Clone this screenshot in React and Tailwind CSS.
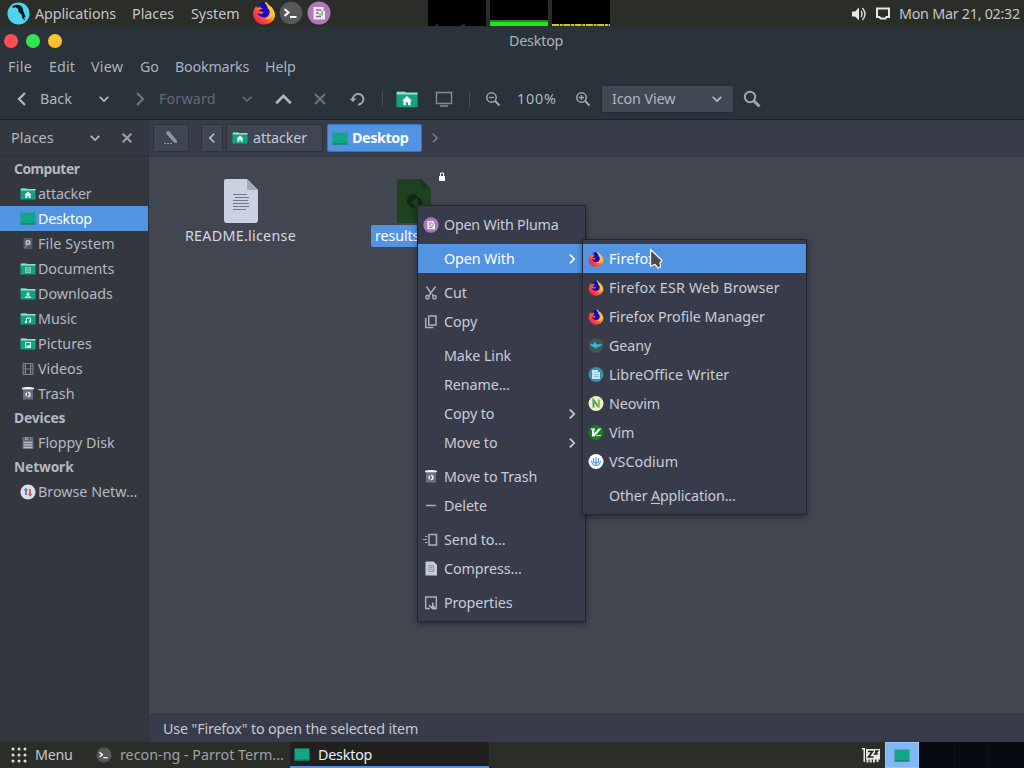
import React from "react";

function Firefox({ className }) {
  return (
    <svg viewBox="0 0 24 24" className={className}>
      <defs>
        <linearGradient id="ff" x1="1" y1="0" x2="0.1" y2="0.9">
          <stop offset="0.1" stopColor="#fff04a" />
          <stop offset="0.4" stopColor="#ffb32c" />
          <stop offset="0.65" stopColor="#ff5a34" />
          <stop offset="1" stopColor="#e8164e" />
        </linearGradient>
      </defs>
      <path d="M4 5 5.500 7 8 5.500 12 4 14 0.500C15 3 18 4.500 20 7c2 2.500 3 4.500 3 7 0 5.500-5 9.500-11 9.500S1 19 1 13C1 9.500 2.500 8 4 5Z" fill="url(#ff)" />
      <path d="M15 1c4 4 5.500 8 4 12-1.500 3-4 4.500-6.500 4.500 5 1.500 9-1.500 9-6.500C21.500 7 17 4 15 1Z" fill="#ffc92d" />
      <path d="M7 3 11.500 1.500c3 1.500 4 3.500 4.200 6 2 1.200 2.300 3.500 1.500 5.500-1.200 3-4.200 4-7.200 3-2.500-.7-4-2-4.500-3.500l5 .5 1-2-4.500-1c.5-1.500 2-2 4-2.500L7 6l2.500-1.500Z" fill="#1605c8" />
    </svg>
  );
}

function Pluma({ className }) {
  return (
    <svg viewBox="0 0 24 24" className={className}>
      <circle cx="12" cy="12" r="11.500" fill="#ad78b6" />
      <path d="M6.500 6h10v4h1.500v8.500H6.500Z" fill="#f3e7f3" />
      <path d="M9 9h5M9 12h3M9 15.500h5" stroke="#93659b" strokeWidth="1.500" />
      <path d="M15 9.500v4h-3" stroke="#8ebd91" strokeWidth="1.800" fill="none" />
    </svg>
  );
}

function Term({ className }) {
  return (
    <svg viewBox="0 0 24 24" className={className}>
      <circle cx="12" cy="12" r="11.300" fill="#575757" />
      <path d="m5.500 8 4 3.500-4 3.500" stroke="#fff" strokeWidth="2" fill="none" />
      <path d="M11 16h6.500" stroke="#fff" strokeWidth="2" />
    </svg>
  );
}

function Parrot({ className }) {
  return (
    <svg viewBox="0 0 24 24" className={className}>
      <circle cx="12" cy="12" r="11.500" fill="#4fd3f0" />
      <path d="M5.500 4.500 9 3c3-.5 6 .8 7.200 3l1 4 2.500 6-1.700-.5.500 4-2.700-3-.5-3.500L12 10.500 11.500 7 9 5.500 6 6Z" fill="#07151c" />
    </svg>
  );
}

function Folder({ kind, className }) {
  return (
    <svg viewBox="0 0 16 12" className={className}>
      <path d="M.5 1.500Q.5.500 1.500.500H6L7 1.500H15.500V11.500H.5Z" fill="#13a380" />
      <path d="M.8 2.500V.6H6.500l1 .5H15.500V2.500Z" fill="#8fe3cc" />
      {kind === "home" && <path d="m8 3.500 3.500 3.300h-1V10H8.800V8H7.200v2H5.500V6.800h-1Z" fill="#fff" />}
      {kind === "doc" && <path d="M5 4h6v6H5Z" fill="#79ccb9" />}
      {kind === "doc" && <path d="M6 5.500h4M6 7h4M6 8.500h4" stroke="#3c9e89" strokeWidth=".6" />}
      {kind === "down" && <path d="M8 4v3M6.500 6 8 7.500 9.500 6M5 9.200h6" stroke="#d9fff5" strokeWidth="1.200" fill="none" />}
      {kind === "music" && <path d="M6.500 9V5h4v3.500" stroke="#d9fff5" strokeWidth="1" fill="none" />}
      {kind === "music" && <path d="M5 8h2v2H5ZM9 7.500h2v2H9Z" fill="#d9fff5" />}
      {kind === "pic" && <path d="M5.500 4.500h5v5h-5Z" stroke="#d9fff5" strokeWidth="1" fill="none" />}
      {kind === "pic" && <path d="m6 9 2-2 1 .8 1.500-1.800v3Z" fill="#d9fff5" />}
    </svg>
  );
}

function Desk({ className }) {
  return (
    <svg viewBox="0 0 16 13" className={className}>
      <path d="M.5.500h15v12H.5Z" fill="#13a587" />
      <path d="M.5 11.500h15v1H.5Z" fill="#0d765e" />
    </svg>
  );
}

function Trash({ className }) {
  return (
    <svg viewBox="0 0 14 16" className={className}>
      <path d="M2 3h10v10.500H2Z" fill="#697080" />
      <path d="M1 1.700 5 1h4l4 .7v1.500H1Z" fill="#eef0f4" />
      <circle cx="7" cy="8.500" r="2" stroke="#f1f3f6" strokeWidth="1.400" strokeDasharray="3.200 1" fill="none" />
    </svg>
  );
}

function Drive({ className }) {
  return (
    <svg viewBox="0 0 14 16" className={className}>
      <path d="M2.500 2h9v11h-9Z" fill="#555b66" />
      <circle cx="7" cy="6.500" r="2.700" fill="#b6bbc5" />
      <circle cx="7" cy="6.500" r=".9" fill="#555b66" />
      <path d="m6 9-2 3" stroke="#8d939e" />
    </svg>
  );
}

function Film({ className }) {
  return (
    <svg viewBox="0 0 14 16" className={className}>
      <path d="M2 2.500h10v11H2ZM4.500 2.500v11M9.500 2.500v11M4.500 8h5" stroke="#7f8590" fill="none" />
      <path d="M2 5h2M2 8h2M2 11h2M10 5h2M10 8h2M10 11h2" stroke="#7f8590" />
    </svg>
  );
}

function Floppy({ className }) {
  return (
    <svg viewBox="0 0 14 16" className={className}>
      <path d="M1.500 2h10l1 1v11h-11Z" fill="#626974" />
      <path d="M4 2h6v3H4Z" fill="#888f9b" />
      <path d="M7.500 2.500h1.500v2H7.500Z" fill="#33373f" />
      <path d="M2.500 7.500h9M2.500 10h9M2.500 12.500h9" stroke="#b7bdc7" strokeWidth="1.400" />
    </svg>
  );
}

function Net({ className }) {
  return (
    <svg viewBox="0 0 16 16" className={className}>
      <circle cx="8" cy="8" r="7.600" fill="#dcdfe8" />
      <path d="M3.500 6.500 6 3.500l2.300 3H7V11H5V6.500Z" fill="#657fa8" />
      <path d="M7.700 9.800 10 13l2.500-3.200H11V5H9v4.800Z" fill="#e25a5a" />
    </svg>
  );
}

function Chevron({ dir, className, w = 2 }) {
  const d = { left: "M10 1 4 7l6 6", right: "M4 1l6 6-6 6", down: "M2 4.500 7 9.500l5-5", up: "M1 10l6-6 6 6" }[dir];
  return (
    <svg viewBox="0 0 14 14" className={className}>
      <path d={d} stroke="currentColor" strokeWidth={w} fill="none" />
    </svg>
  );
}

function Cross({ className }) {
  return (
    <svg viewBox="0 0 14 14" className={className}>
      <path d="m2 2 10 10M12 2 2 12" stroke="currentColor" strokeWidth="2.400" fill="none" />
    </svg>
  );
}

function Zoom({ sign, className }) {
  return (
    <svg viewBox="0 0 16 16" className={className}>
      <circle cx="6.500" cy="6.500" r="4.700" stroke="#a2a8b2" strokeWidth="1.500" fill="none" />
      <path d="m10 10 4.500 4.500" stroke="#a2a8b2" strokeWidth="2" />
      <path d={sign === "+" ? "M4 6.500h5M6.500 4v5" : "M4 6.500h5"} stroke="#a2a8b2" strokeWidth="1.300" />
    </svg>
  );
}

function ZRam({ className }) {
  return (
    <svg viewBox="0 0 18 16" className={className}>
      <path d="M0 1h3v14H1.500V2.500H0Z" fill="#e5e5e2" />
      <path d="M4 2h14v10.500H4Z" fill="#e5e5e2" />
      <path d="M6 4.500h4.500L6.500 10H11.500M13 4h2.500L13 7h2.800" stroke="#20241f" strokeWidth="1.700" fill="none" />
      <path d="M5.500 12v3.500M8.700 12v3.500M12 12v3.500M15.500 12v3" stroke="#e5e5e2" strokeWidth="2" />
    </svg>
  );
}

const stroke = { stroke: "#a9aeb9", strokeWidth: 1.5, fill: "none" };
const menuIcons = {
  pluma: <Pluma className="size-4" />,
  cut: (
    <svg viewBox="0 0 14 14" className="size-3.5">
      <path d="M2.500 0.500 6.500 6.500M11.500 0.500 4.700 10M8 8 9.500 10" {...stroke} />
      <circle cx="3.500" cy="11.200" r="1.700" {...stroke} />
      <circle cx="10.500" cy="11.200" r="1.700" {...stroke} />
    </svg>
  ),
  copy: (
    <svg viewBox="0 0 14 14" className="size-3.5">
      <path d="M4.700 1h7.300v9H4.700ZM1.700 3v9.500H9.500" {...stroke} />
    </svg>
  ),
  trash: <Trash className="h-4 w-3.5" />,
  del: (
    <svg viewBox="0 0 14 14" className="size-3.5">
      <path d="M2 6.500h10" {...stroke} />
    </svg>
  ),
  send: (
    <svg viewBox="0 0 16 14" className="mr-0.5 h-3.5 w-4">
      <path d="M7 1.500h7.500v10.500H7Z" {...stroke} />
      <path d="M3 3.500h2.500M1 6.500h4M3 9.500h2.500" stroke="#a9aeb9" strokeWidth="1" />
    </svg>
  ),
  zip: (
    <svg viewBox="0 0 14 16" className="h-4 w-3.5">
      <path d="M1.500.5h8l3.500 3.500V14.500H1.500Z" fill="#c3ccd8" />
      <path d="M5 4.500h4.500v6H5ZM6 6.500h2.500M6 8.500h2.500" stroke="#8c95a5" fill="none" />
    </svg>
  ),
  props: (
    <svg viewBox="0 0 14 14" className="size-3.5">
      <path d="M6 12.500H1.700v-11.500h10.600v11.500H10" {...stroke} />
      <path d="M5 8.500l3 2V6.500h1.500v3l1.500 1v3H8.500L5 10Z" fill="#b1b6c1" />
    </svg>
  ),
};

function disc(bg, inner) {
  return (
    <svg viewBox="0 0 16 16" className="size-4">
      <circle cx="8" cy="7.500" r="7.500" fill={bg} />
      {inner}
    </svg>
  );
}

const apps = [
  ["Firefox", <Firefox className="size-4" />, "tracking-[0.15px]"],
  ["Firefox ESR Web Browser", <Firefox className="size-4" />, "tracking-[0.18px]"],
  ["Firefox Profile Manager", <Firefox className="size-4" />, "tracking-[-0.05px]"],
  ["Geany", disc("#46515a", <path d="M1.500 5.500 5 6.500l2-3 1.500 3L14.500 6 12 8.500l-3 .5L7.500 11 6 9 4 8.500Z" fill="#24c3d6" />)],
  ["LibreOffice Writer", disc("#388fa6", <><path d="M4 3h6v2h2v7H4Z" fill="#c7e5f1" /><path d="M6 5.500h3.500M6 7.500h5M6 9.500h5" stroke="#81bdd4" strokeWidth=".8" /></>), "tracking-[0.08px]"],
  ["Neovim", disc("#f3f0c4", <><path d="M5.500 11.500V4l5 7" stroke="#4d9f69" strokeWidth="2" fill="none" /><path d="M10.800 3.500v8" stroke="#83b84c" strokeWidth="2" /></>)],
  ["Vim", disc("#187f20", <><path d="M3 3.500H7v1.500H6.200v3.500L10.500 3.500h3L6.500 11.500H4V5h-1Z" fill="#fff" /><path d="M8.500 10.500h4.500" stroke="#cfd8cf" strokeWidth="1.300" /></>)],
  ["VSCodium", disc("#fff", <path d="M8 3v8.500M8 11.500C5 11.500 4 9.500 3.500 7M8 11.500c3 0 4-1.500 4.500-4.500M5.500 4v4L8 9.500M10.500 4v4L8 9.500" stroke="#5499e0" strokeWidth="1.200" fill="none" />), "tracking-[0.03px]"],
];

const context = [
  ["Open With Pluma", "pluma"],
  null,
  ["Open With", "", "active"],
  null,
  ["Cut", "cut"],
  ["Copy", "copy"],
  null,
  ["Make Link"],
  ["Rename..."],
  ["Copy to", "", "more"],
  ["Move to", "", "more"],
  null,
  ["Move to Trash", "trash"],
  ["Delete", "del"],
  null,
  ["Send to...", "send"],
  ["Compress...", "zip"],
  null,
  ["Properties", "props"],
];

const places = [
  ["Computer"],
  ["attacker", <Folder kind="home" className="h-3 w-4" />],
  ["Desktop", <Desk className="h-[13px] w-4" />],
  ["File System", <Drive className="h-4 w-3.5" />],
  ["Documents", <Folder kind="doc" className="h-3 w-4" />],
  ["Downloads", <Folder kind="down" className="h-3 w-4" />],
  ["Music", <Folder kind="music" className="h-3 w-4" />],
  ["Pictures", <Folder kind="pic" className="h-3 w-4" />],
  ["Videos", <Film className="h-4 w-3.5" />],
  ["Trash", <Trash className="h-4 w-3.5" />],
  ["Devices"],
  ["Floppy Disk", <Floppy className="h-4 w-3.5" />],
  ["Network"],
  ["Browse Netw...", <Net className="size-4" />],
];

const placeSpacing = {
  "File System": "tracking-[0.15px]",
  Desktop: "tracking-[-0.25px]",
  Documents: "tracking-[-0.1px]",
  attacker: "tracking-[-0.15px]",
};

function TopPanel() {
  return (
    <div className="flex h-[27px] shrink-0 items-center bg-[#2b2d28] text-[#c5c6c9]">
      <Parrot className="mb-px ml-[7px] size-[23px]" />
      <span className="ml-[5px] w-[97px] tracking-[-0.1px]">Applications</span>
      <span className="w-[59px] tracking-normal">Places</span>
      <span className="w-[61px] tracking-normal">System</span>
      <Firefox className="mb-px size-6" />
      <Term className="mb-px ml-[3px] size-6" />
      <Pluma className="mb-px ml-1 size-6" />
      <div className="ml-[97px] flex h-full gap-1">
        <div className="flex h-[26px] w-[58px] items-end bg-black pl-2">
          <svg viewBox="0 0 50 3" className="h-[3px] w-[50px]"><path d="M1 3V1M26 3V2M28 3V1" stroke="#48676d" /></svg>
        </div>
        <div className="flex h-[26px] w-[58px] flex-col justify-end bg-black">
          <div className="h-0.5 bg-[#487048]" />
          <div className="h-1 bg-[#12ed12]" />
        </div>
        <div className="flex h-[26px] w-[58px] items-end bg-black">
          <svg viewBox="0 0 58 2" className="h-0.5 w-[58px]"><path d="M0 1h58" stroke="#c8c91e" strokeWidth="2" strokeDasharray="7 .7 3 .6" /></svg>
        </div>
      </div>
      <div className="ml-auto flex items-center">
        <svg viewBox="0 0 16 16" className="mr-2 size-4">
          <path d="M1 5.500h3l4-4v13l-4-4H1Z" fill="#e5e6e5" />
          <path d="M10 5q2 3 0 6M11.500 2q5 6 0 12" stroke="#d5d6d5" strokeWidth="1.500" fill="none" />
        </svg>
        <svg viewBox="0 0 16 16" className="mr-2 size-4"><path d="M2 2.500h12v8.500h-2.500l-1 1.500h-5l-1-1.500H2Z" stroke="#e5e6e5" strokeWidth="2" fill="none" /></svg>
        <span className="w-[125px] tracking-[-0.25px] whitespace-nowrap">Mon Mar 21, 02:32</span>
      </div>
    </div>
  );
}

function Toolbar() {
  return (
    <div className="flex h-[39px] items-center pb-px text-[#b0b7c1]">
      <Chevron dir="left" w={2.3} className="ml-[15px] size-3.5" />
      <span className="ml-[11px] w-[58px] tracking-normal">Back</span>
      <Chevron dir="down" className="size-3" />
      <Chevron dir="right" w={2.3} className="ml-[23px] size-3.5 text-[#6b747e]" />
      <span className="ml-3 w-[82px] tracking-[0.15px] text-[#626c77]">Forward</span>
      <Chevron dir="down" className="size-3 text-[#626c77]" />
      <Chevron dir="up" w={2.3} className="ml-[22px] size-[17px]" />
      <Cross className="ml-[21px] size-3.5 text-[#69717a]" />
      <svg viewBox="0 0 18 18" className="ml-[22px] size-[18px]">
        <path d="M4 10.500A5.300 5.300 0 1 1 9 14.500" stroke="#a2a8b2" strokeWidth="2" fill="none" />
        <path d="M.5 8.500h7L4 12Z" fill="#a2a8b2" />
      </svg>
      <div className="ml-[15px] h-4 w-px bg-[#47505a]" />
      <Folder kind="home" className="ml-3 h-[17px] w-6" />
      <svg viewBox="0 0 18 16" className="ml-4 h-4 w-[18px]"><path d="M1.500 1.500h15v11h-15ZM5 15h8" stroke="#858c96" strokeWidth="1.400" fill="none" /></svg>
      <div className="ml-4 h-4 w-px bg-[#47505a]" />
      <Zoom sign="-" className="ml-[15px] size-4" />
      <span className="ml-4 w-[58px] tracking-[0.8px]">100%</span>
      <Zoom sign="+" className="size-4" />
      <div className="ml-2.5 flex h-7 w-[133px] items-center justify-between border border-[#252e37] bg-[#424853] px-2.5">
        <span>Icon View</span>
        <Chevron dir="down" className="size-3" />
      </div>
      <svg viewBox="0 0 18 18" className="ml-[9px] size-[18px]">
        <circle cx="7" cy="7" r="5.200" stroke="#a0a6b0" strokeWidth="2" fill="none" />
        <path d="m11 11 5.500 5.500" stroke="#a0a6b0" strokeWidth="3" />
      </svg>
    </div>
  );
}

function Sidebar() {
  return (
    <div className="flex w-[149px] shrink-0 flex-col border-r border-[#2c323c] bg-[#33383f] text-[#b4b8c1]">
      <div className="flex h-[37px] items-center border-b border-[#2b2f38] pl-[11px]">
        <span className="w-[78px] tracking-[0.1px]">Places</span>
        <Chevron dir="down" className="size-3" />
        <Cross className="ml-5 size-3 text-[#9a9fa8]" />
      </div>
      {places.map(([name, icon]) =>
        icon ? (
          <div key={name} className={`flex h-[25px] items-center pl-5 ${name === "Desktop" ? "bg-[#5294e2] text-white" : ""}`}>
            <span className="flex w-[18px] justify-start *:mx-auto *:-translate-x-px">{icon}</span>
            <span className={`whitespace-nowrap ${placeSpacing[name] || "tracking-normal"}`}>{name}</span>
          </div>
        ) : (
          <div key={name} className={`h-6 pl-3.5 text-[13.8px] leading-6 font-bold ${name === "Computer" ? "tracking-[-0.45px]" : "tracking-[-0.15px]"}`}>{name}</div>
        )
      )}
    </div>
  );
}

function PathBar() {
  const btn = "flex h-7 items-center rounded-xs border border-[#2c303c] bg-[#404552]";
  return (
    <div className="flex h-[37px] shrink-0 items-center border-b border-[#303541] bg-[#383c49] pl-1 text-[#c4c8d2]">
      <div className={`${btn} w-9 justify-center`}>
        <svg viewBox="0 0 16 16" className="size-4">
          <path d="m3 2 3-1 8 9.500V13l-3-.5L3.500 4Z" fill="#9196a1" />
          <path d="M1 13.500h9" stroke="#9196a1" strokeDasharray="2 1" />
        </svg>
      </div>
      <div className={`${btn} ml-3 w-[22px] justify-center`}><Chevron dir="left" w={2.2} className="size-2.5" /></div>
      <div className={`${btn} ml-[3px] w-[97px] pl-[5px]`}>
        <Folder kind="home" className="h-3 w-4" />
        <span className="ml-[5px]">attacker</span>
      </div>
      <div className="ml-1 flex h-7 w-[95px] items-center rounded-xs border border-[#3475bd] bg-[#5294e2] pl-1 text-white">
        <Desk className="h-[13px] w-4" />
        <span className="ml-1 font-bold tracking-[-0.4px]">Desktop</span>
      </div>
      <div className="ml-[3px] flex h-7 w-5 items-center justify-center rounded-xs border border-[#343947]"><Chevron dir="right" w={2} className="size-2.5 text-[#7d8390]" /></div>
    </div>
  );
}

function Files() {
  return (
    <div className="flex min-h-0 flex-1 bg-[#424650] pt-[21px] text-[#d5d9e2]">
      <div className="ml-[31px] flex w-[121px] flex-col items-center">
        <svg viewBox="0 0 36 46" className="h-[46px] w-9">
          <path d="M3 1h21l11 11v30q0 3-3 3H4q-3 0-3-3V3q0-2 2-2Z" fill="#cad2e1" />
          <path d="m24 1 11 11H26q-2 0-2-2Z" fill="#a3abba" />
          <path d="M10 16.500h14M12 19.500h14M10 22.500h15M10 25.500h16M10 28.500h16M10 31.500h13" stroke="#737a85" strokeWidth="1.200" />
        </svg>
        <span className="mt-px tracking-[0.28px]">README.license</span>
      </div>
      <div className="relative ml-[70px] flex w-24 flex-col items-center">
        <svg viewBox="0 0 36 46" className="mr-4 h-[46px] w-9 translate-x-[3px]">
          <path d="M1 1h24l10 10v34H1Z" fill="#1e411f" />
          <path d="m25 1 10 10H25Z" fill="#18381a" />
          <path d="m11 21 3-4 6-1 1 3-3 4-4 1 5 3v4l-5-2-3-4ZM20 18l5 3 2 4-4 3-2-3 1-3Z" fill="#102812" />
        </svg>
        <svg viewBox="0 0 8 10" className="absolute top-[-6px] left-[67px] h-2.5 w-2">
          <path d="M1 4h6v5H1Z" fill="#fff" />
          <path d="M2.500 4V1h3v3" stroke="#fff" fill="none" />
        </svg>
        <div className="mt-px w-[85px] self-start rounded-xs bg-[#5294e2] pl-1 text-white">results.html</div>
      </div>
    </div>
  );
}

function BottomPanel() {
  return (
    <div className="flex h-[26px] shrink-0 bg-[#2b2d28] text-[#c5c6c9]">
      <div className="flex w-24 items-center pl-[11px]">
        <svg viewBox="0 0 16 16" className="size-4">
          {[2, 8, 14].map((x) => [2, 8, 14].map((y) => <circle key={`${x}-${y}`} cx={x} cy={y} r="1.500" fill="#dedede" />))}
        </svg>
        <span className="ml-2 tracking-[-0.3px]">Menu</span>
      </div>
      <div className="flex w-[194px] items-center text-[#9da2a9]">
        <Term className="size-4" />
        <span className="ml-2 tracking-normal whitespace-nowrap">recon-ng - Parrot Term...</span>
      </div>
      <div className="flex w-[199px] items-center border-b-2 border-[#5294e2] bg-[#20211e] pl-1 text-[#eceef1]">
        <Desk className="h-[13px] w-4" />
        <span className="mt-0.5 ml-2 tracking-[-0.2px]">Desktop</span>
      </div>
      <div className="ml-auto flex">
        <ZRam className="mt-[5px] mr-[5px] h-4 w-[18px]" />
        <div className="flex w-[34px] items-center justify-center border border-[#9ac8fc] bg-[#83b6f3]"><Desk className="h-[13px] w-4" /></div>
        <div className="flex w-[105px] bg-[#070a11]">
          <div className="w-9 border-r border-[#0d1219]" />
          <div className="w-[34px] border-r border-[#0d1219]" />
        </div>
      </div>
    </div>
  );
}

function ContextMenu() {
  return (
    <div className="absolute top-[205px] left-[417px] h-[417px] w-[169px] border border-[#22252e] bg-[#383c4a] py-1 text-[#c8ccd6] shadow-[0_2px_6px_rgba(0,0,0,0.4)]">
      {context.map((item, i) =>
        item ? (
          <div key={i} className={`flex h-[29px] items-center ${item[2] === "active" ? "bg-[#5294e2] text-white" : ""}`}>
            <span className="flex w-[26px] justify-center">{menuIcons[item[1]]}</span>
            <span className={i === 0 ? "flex-1 tracking-[-0.22px]" : "flex-1"}>{item[0]}</span>
            {item[2] && <Chevron dir="right" w={2.4} className="mr-2 size-2.5" />}
          </div>
        ) : (
          <div key={i} className="h-[5px]" />
        )
      )}
    </div>
  );
}

function OpenWithMenu() {
  return (
    <div className="absolute top-[239px] left-[582px] h-[276px] w-[225px] border border-[#22252e] bg-[#383c4a] py-1 text-[#c8ccd6] shadow-[0_2px_6px_rgba(0,0,0,0.4)]">
      {apps.map(([name, icon, spacing], i) => (
        <div key={name} className={`flex h-[29px] items-center pl-[5px] ${i === 0 ? "bg-[#5294e2] text-white" : ""}`}>
          <span className="mr-[5px]">{icon}</span>
          <span className={spacing}>{name}</span>
        </div>
      ))}
      <div className="mt-[5px] flex h-[29px] items-center pl-[26px]">
        <span className="tracking-[-0.15px]">Other <u className="underline-offset-2">A</u>pplication...</span>
      </div>
    </div>
  );
}

export default function App() {
  return (
    <div className="relative flex h-[768px] w-[1024px] flex-col overflow-hidden bg-[#2a323a] font-['Noto_Sans',sans-serif] text-[14.3px] leading-[22px] tracking-[-0.1px]">
      <TopPanel />
      <div className="h-[92px] shrink-0 text-[#abb2bc]">
        <div className="flex h-[27px] items-center">
          <div className="ml-1 flex w-[505px] gap-2">
            <i className="size-3.5 rounded-full bg-[#fc5058]" />
            <i className="size-3.5 rounded-full bg-[#32e453]" />
            <i className="size-3.5 rounded-full bg-[#ffc12e]" />
          </div>
          <span className="tracking-[-0.2px]">Desktop</span>
        </div>
        <div className="flex h-[26px] items-center pl-2">
          <span className="w-[41px] tracking-[0.3px]">File</span>
          <span className="w-[42px] tracking-[0.1px]">Edit</span>
          <span className="w-[49px] tracking-[0.2px]">View</span>
          <span className="w-[35px]">Go</span>
          <span className="w-[90px] tracking-[-0.2px]">Bookmarks</span>
          <span>Help</span>
        </div>
        <Toolbar />
      </div>
      <div className="h-px shrink-0 bg-[#1c2229]" />
      <div className="flex min-h-0 flex-1">
        <Sidebar />
        <div className="flex min-w-0 flex-1 flex-col">
          <PathBar />
          <Files />
          <div className="flex h-7 shrink-0 items-center border-t border-[#2e333e] bg-[#383c4a] pl-3.5 tracking-[-0.15px] text-[#c4c8d2]">Use "Firefox" to open the selected item</div>
        </div>
      </div>
      <BottomPanel />
      <ContextMenu />
      <OpenWithMenu />
      <svg viewBox="0 0 14 22" className="absolute top-[248px] left-[649px] h-[22px] w-3.5">
        <path d="M1.500 1.500v16.500l4.500-1.500 3 3.500 2.500-1-.5-4 2-2.500Z" fill="#4b4b4b" stroke="#f1f1f1" strokeWidth="1.300" />
      </svg>
    </div>
  );
}
